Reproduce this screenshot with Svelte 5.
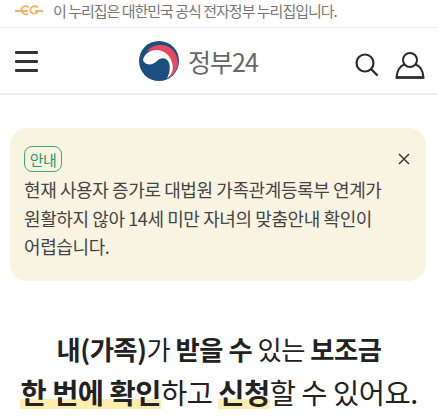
<script>
  const lines = ['현재 사용자 증가로 대법원 가족관계등록부 연계가', '원활하지 않아 14세 미만 자녀의 맞춤안내 확인이', '어렵습니다.'];
</script>

<div class="page">
  <div class="gov-bar">
    <svg class="eg" width="28" height="12" viewBox="0 0 28 12" fill="none" stroke="#edb767" stroke-width="1.800">
      <path d="M0 6h13M20 6h8" />
      <path d="M14 2c-3-1.500-7-1-7.500 2-.5 3 2 6 6.500 5" />
      <path d="M23 2.400c-2.500-1.800-6.500-1.600-7.500 1.200-1 3 1.500 5.600 4.500 5 2-.4 2.500-1.500 2.500-2.600" />
    </svg>
    <span>이 누리집은 대한민국 공식 전자정부 누리집입니다.</span>
  </div>

  <header class="header">
    <div class="burger"><i></i><i></i><i></i></div>
    <div class="logo">
      <svg width="42" height="42" viewBox="0 0 42 42">
        <circle cx="21" cy="21" r="20" fill="#1d4f7c" />
        <path d="M9 11C14 5 24 3 31 7 39 12 43 24 37 32 35 35 33 37 31 38 35 32 36 24 32 18 28 12 18 9 9 11z" fill="#e8495f" />
        <path d="M5 20C7 12 15 8 24 11 32 14 37 24 34 32 33 35 31 37 29 38.500 32 33 33 25 30 21 27 17 22 18 19 21 16 24 12 25 9 24 7 23.500 6 22 5 20z" fill="#fff" />
      </svg>
      <span>정부24</span>
    </div>
    <div class="tools">
      <svg width="26" height="26" viewBox="0 0 26 26" fill="none" stroke="#2b2b2b" stroke-width="2.200">
        <circle cx="11" cy="11" r="8.500" />
        <path d="M17.500 17.500 23 23" stroke-linecap="round" />
      </svg>
      <svg width="30" height="28" viewBox="0 0 30 28" fill="none" stroke="#2b2b2b" stroke-width="2">
        <circle cx="15" cy="9" r="7" />
        <path d="M9.500 13.500C5 15 2 20 1.500 26.500h27C28 20 25 15 20.500 13.500" />
        <path d="M1 26.500h28" stroke-width="2.500" />
      </svg>
    </div>
  </header>

  <div class="notice">
    <div class="notice-top">
      <span class="badge">안내</span>
      <svg class="close" width="14" height="14" viewBox="0 0 14 14" stroke="#3a3a3a" stroke-width="1.500" fill="none">
        <path d="M2 2l10 10M12 2 2 12" />
      </svg>
    </div>
    <p>
      {#each lines as line}
        <span>{line}</span>
      {/each}
    </p>
  </div>

  <h2 class="title">
    <span class="row first"><b>내(가족)</b>가 <b>받을 수</b> 있는 <b>보조금</b></span>
    <span class="row second"><b class="mark">한 번에 확인</b>하고 <b class="mark">신청</b>할 수 있어요.</span>
  </h2>
</div>

<style>
  :global(body) {
    background: #fff;
    overflow: hidden;
  }

  .page {
    width: 438px;
    height: 419px;
    overflow: hidden;
    font-family: "Noto Sans CJK KR", "Noto Sans", sans-serif;
    color: #222;
  }

  .gov-bar {
    height: 28px;
    box-sizing: border-box;
    border-bottom: 1px solid #ececec;
    display: flex;
    align-items: center;
    padding: 0 0 6px 15px;
    gap: 10px;
    font-size: 15px;
    letter-spacing: -1px;
    color: #777;
  }

  .header {
    height: 67px;
    box-sizing: border-box;
    border-bottom: 2px solid #eee;
    position: relative;
    display: flex;
    align-items: center;
    justify-content: space-between;
    padding: 0 12px 0 15px;
  }

  .burger {
    width: 23px;
    display: flex;
    flex-direction: column;
    gap: 6px;
    margin-top: 2px;
  }

  .burger i {
    display: block;
    height: 3px;
    border-radius: 1px;
    background: #333;
  }

  .logo {
    position: absolute;
    left: 138px;
    top: 12px;
    display: flex;
    align-items: center;
    gap: 8px;
    font-size: 25px;
    letter-spacing: -1px;
    color: #666;
  }

  .tools {
    display: flex;
    align-items: center;
    gap: 15px;
    margin-top: 9px;
    margin-right: 1px;
  }

  .notice {
    margin: 33px 12px 0 10px;
    height: 153px;
    box-sizing: border-box;
    background: #f9f3e2;
    border-radius: 17px;
    padding: 18px 15px 0 14px;
  }

  .notice-top {
    display: flex;
    justify-content: space-between;
    align-items: center;
  }

  .badge {
    box-sizing: border-box;
    width: 38px;
    height: 26px;
    border: 1px solid #3fa878;
    border-radius: 8px;
    display: flex;
    align-items: center;
    justify-content: center;
    font-size: 15px;
    letter-spacing: -0.5px;
    color: #1f9a63;
  }

  .notice p {
    margin: 3px 0 0;
    font-size: 18px;
    line-height: 28.500px;
    letter-spacing: -0.4px;
    color: #444;
  }

  .notice p span {
    display: block;
    white-space: nowrap;
  }

  .title {
    margin: 47px 0 0;
    font-size: 28.500px;
    font-weight: 400;
    line-height: 42px;
    letter-spacing: -0.5px;
    text-align: center;
    color: #222;
  }

  .row {
    display: block;
    white-space: nowrap;
  }

  .first {
    font-size: 26.300px;
  }

  .second {
    margin-top: 1px;
  }

  .title b {
    font-weight: 700;
  }

  .mark {
    background: linear-gradient(transparent 68%, #fdeeb0 68%, #fdeeb0 92%, transparent 92%);
  }
</style>
